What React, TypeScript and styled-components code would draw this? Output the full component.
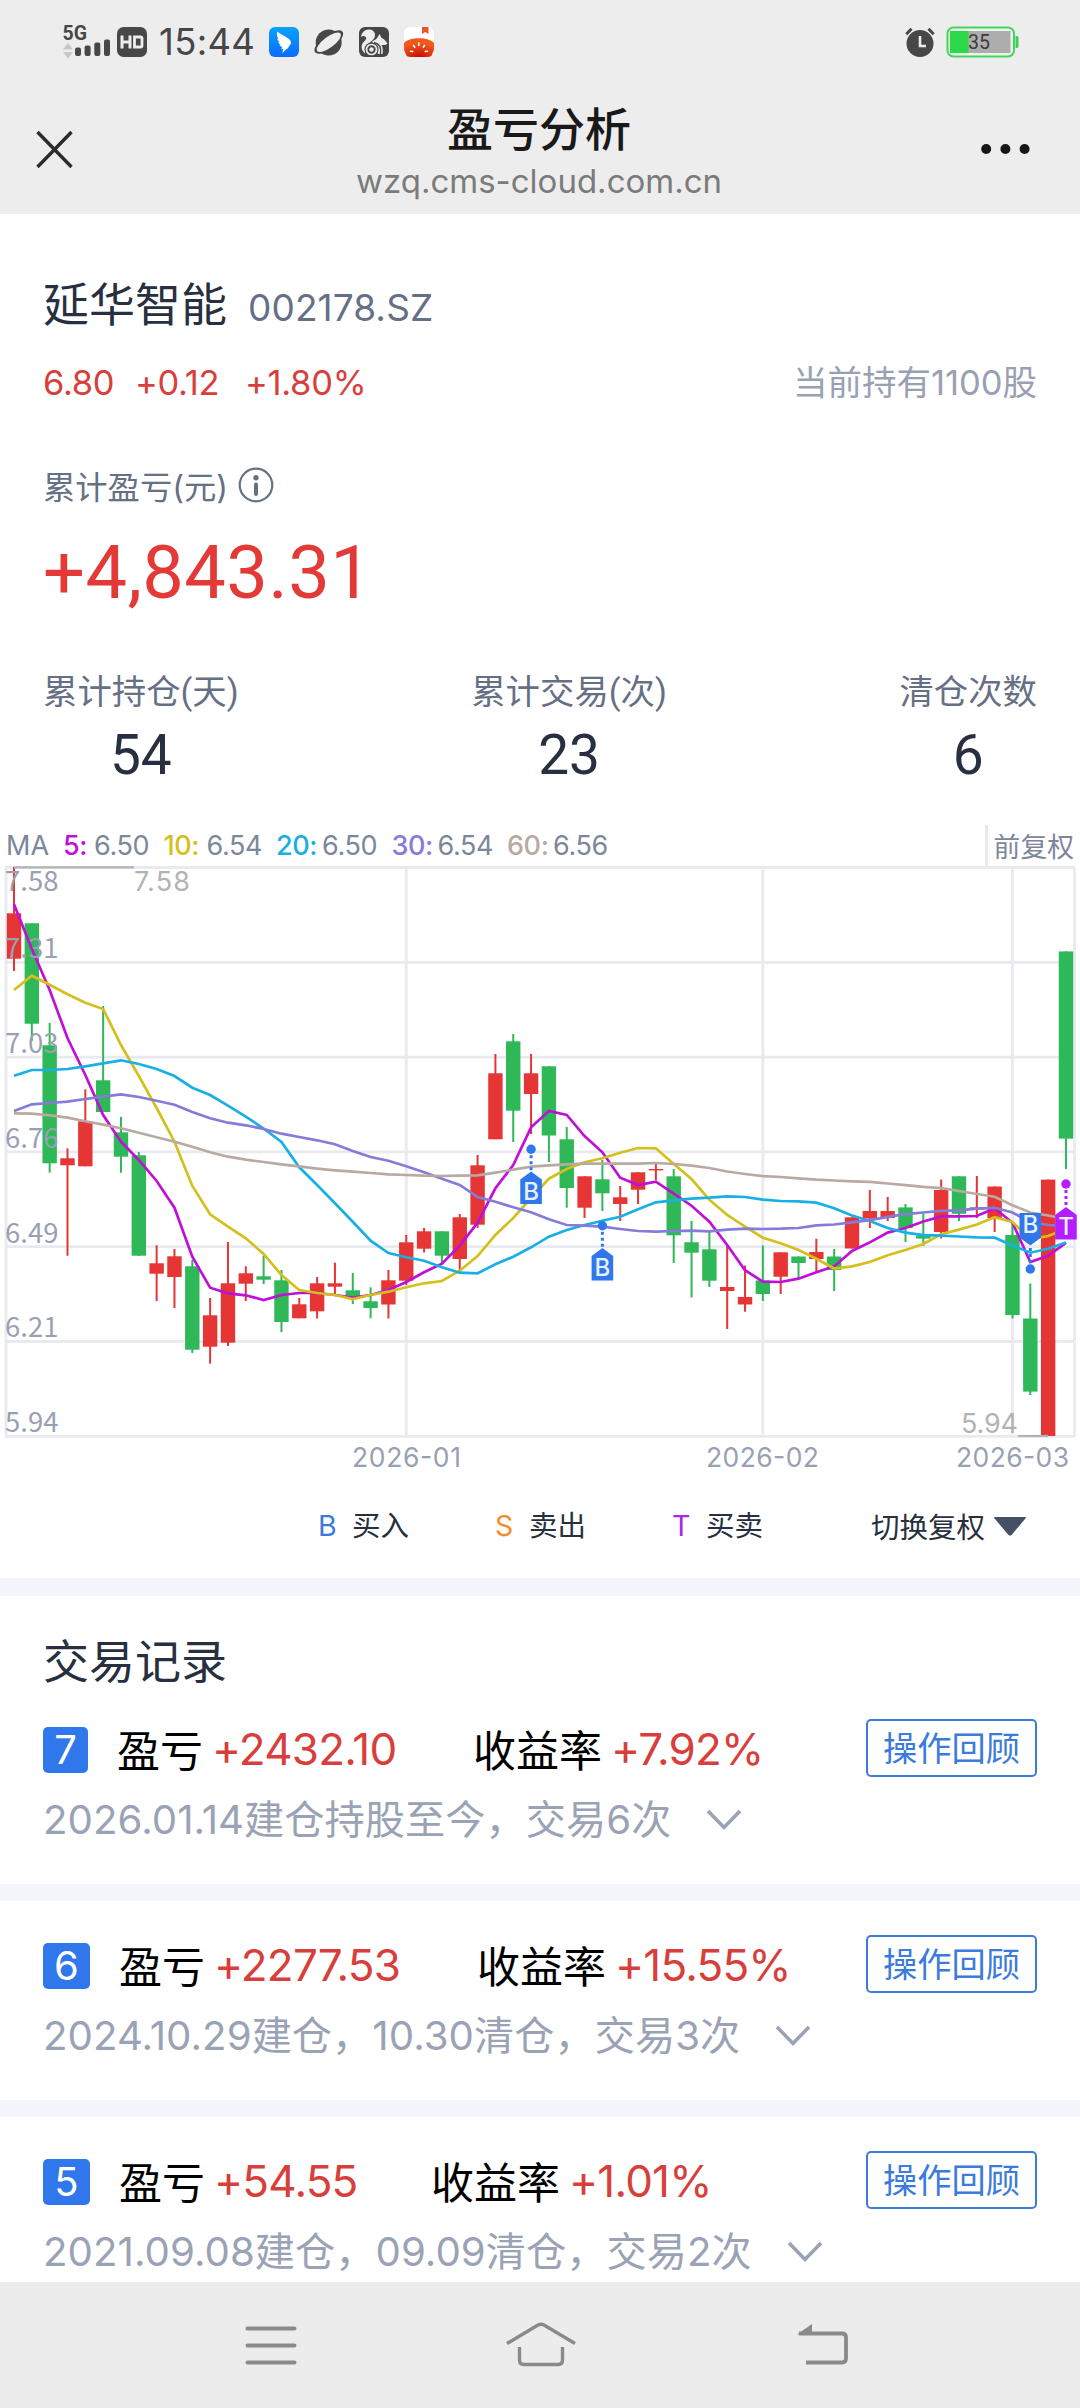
import React from "react";
import styled, { createGlobalStyle } from "styled-components";

const CJK = `"Noto Sans CJK SC", sans-serif`;
const NUM = `Roboto, ${CJK}`;
const UI = `Inter, ${CJK}`;

const Global = createGlobalStyle`
  * { box-sizing: border-box; }
  body { margin: 0; background: #fff; font-family: ${UI}; }
`;

const Screen = styled.div`
  width: 1080px;
  height: 2408px;
  display: flex;
  flex-direction: column;
  background: #fff;
  overflow: hidden;
`;

/* ---------- top area ---------- */

const TopArea = styled.header`
  flex: none;
  height: 214px;
  background: #ededed;
  display: flex;
  flex-direction: column;
`;

const StatusBar = styled.div`
  height: 84px;
  padding: 0 60px 0 62px;
  display: flex;
  align-items: center;
  justify-content: space-between;
`;

const StatusGroup = styled.div<{ $gap: number }>`
  display: flex;
  align-items: center;
  gap: ${(p) => p.$gap}px;
`;

const Signal = styled.div`
  width: 50px;
  height: 36px;
  margin-right: 5px;

  svg {
    display: block;
    overflow: visible;
  }
`;

const Clock = styled.span`
  width: 99px;
  margin: 0 11px 0 12px;
  font: 400 36.5px/44px ${UI};
  letter-spacing: 0.3px;
  color: #474747;
  white-space: nowrap;
`;

const TitleBar = styled.div`
  height: 130px;
  padding: 0 50px 0 36px;
  display: grid;
  grid-template-columns: 120px 1fr 106px;
`;

const TitleButton = styled.button<{ $end?: boolean }>`
  border: 0;
  padding: 0;
  background: none;
  height: 130px;
  display: flex;
  align-items: center;
  justify-content: ${(p) => (p.$end ? "flex-end" : "flex-start")};
`;

const TitleText = styled.div`
  display: flex;
  flex-direction: column;
  align-items: center;
  padding: 12px 2px 0 0;
`;

const PageTitle = styled.h1`
  margin: 0;
  font: 500 46px/60px ${CJK};
  color: #191919;
`;

const PageHost = styled.div`
  font: 400 33px/40px ${UI};
  color: #7b7b7b;
  padding-top: 5px;
`;

/* ---------- summary ---------- */

const Main = styled.main`
  flex: 1;
  min-height: 0;
  overflow: hidden;
`;

const Summary = styled.section`
  padding: 57px 43px 0 43px;
  height: 611px;
`;

const Row = styled.div<{ $h: number; $top?: number }>`
  display: flex;
  align-items: baseline;
  height: ${(p) => p.$h}px;
  line-height: ${(p) => p.$h}px;
  margin-top: ${(p) => p.$top ?? 0}px;
  white-space: nowrap;
`;

const StockName = styled.h2`
  margin: 0 21px 0 0;
  font: 400 46px/60px ${CJK};
  color: #272f40;
`;

const StockCode = styled.span`
  font-size: 37px;
  letter-spacing: 0.1px;
  color: #667085;
`;

const Quote = styled.span<{ $w: number }>`
  width: ${(p) => p.$w}px;
  font-size: 34.5px;
  letter-spacing: -0.3px;
  color: #d83f3c;
`;

const Holding = styled.span`
  margin-left: auto;
  font-size: 34.5px;
  color: #98a1b3;
`;

const ProfitLabel = styled.div`
  display: flex;
  align-items: center;
  gap: 10px;
  height: 44px;
  margin-top: 55px;
  font-size: 32.3px;
  color: #667085;
`;

const Profit = styled.div`
  height: 80px;
  margin-top: 26px;
  font-family: ${NUM};
  font-size: 74px;
  font-weight: 380;
  line-height: 80px;
  letter-spacing: 0.4px;
  color: #e33a37;
`;

const Stats = styled.div`
  display: flex;
  justify-content: space-between;
  margin-top: 54px;
`;

const Stat = styled.div`
  display: flex;
  flex-direction: column;
  align-items: center;
`;

const StatLabel = styled.div`
  font-family: ${NUM};
  font-size: 34.4px;
  line-height: 50px;
  color: #667085;
`;

const StatValue = styled.div`
  font-family: ${NUM};
  font-size: 55px;
  font-weight: 380;
  line-height: 66px;
  margin-top: 5px;
  color: #272f40;
`;

/* ---------- chart ---------- */

const MaBar = styled.div`
  height: 41px;
  padding: 0 6px 0 6px;
  display: flex;
  align-items: center;
  font: 400 27px/41px ${UI};
  letter-spacing: -0.4px;
  color: #7c879b;
  white-space: nowrap;
`;

const MaName = styled.span`
  width: 57px;
  letter-spacing: 0;
`;

const MaKey = styled.span<{ $c: string; $w: number }>`
  width: ${(p) => p.$w}px;
  color: ${(p) => p.$c};
  font-weight: 500;
`;

const MaValue = styled.span`
  width: 69.5px;
`;

const Adjust = styled.span`
  margin-left: auto;
  padding-left: 6px;
  border-left: 3px solid #e9eaf0;
  font: 400 26.8px/41px ${CJK};
  letter-spacing: 0;
`;

const ChartSvg = styled.svg`
  display: block;
  overflow: visible;
`;

const Legend = styled.div`
  display: flex;
  align-items: center;
  height: 60px;
  margin: 18px 0 22px;
  padding-left: 318px;
  font-size: 28.5px;
  line-height: 42px;
  color: #272f40;
`;

const LegendItem = styled.div<{ $w: number }>`
  display: flex;
  align-items: baseline;
  width: ${(p) => p.$w}px;
`;

const LegendKey = styled.span<{ $c: string }>`
  width: 34px;
  color: ${(p) => p.$c};
`;

const SwitchAdjust = styled.button`
  display: flex;
  align-items: center;
  gap: 8px;
  border: 0;
  padding: 0;
  background: none;
  font: 400 28.5px/42px ${CJK};
  color: #272f40;
`;

/* ---------- trade records ---------- */

const Band = styled.div<{ $h: number }>`
  height: ${(p) => p.$h}px;
  background: #f4f5fa;
`;

const RecordsTitle = styled.h2`
  margin: 0;
  padding: 28px 43px 0;
  height: 104px;
  font: 400 46px/68px ${CJK};
  color: #272f40;
`;

const Record = styled.article<{ $h: number; $top: number }>`
  height: ${(p) => p.$h}px;
  padding: ${(p) => p.$top}px 43px 0;
`;

const RecordHead = styled.div`
  display: flex;
  align-items: center;
  height: 58px;
  font-size: 43px;
  line-height: 58px;
  white-space: nowrap;
`;

const Badge = styled.span<{ $w: number }>`
  width: ${(p) => p.$w}px;
  height: 46px;
  margin: 4px 29px 0 0;
  border-radius: 5px;
  background: #2f77ea;
  color: #fff;
  font-size: 40px;
  line-height: 46px;
  text-align: center;
`;

const Label = styled.span`
  font-family: ${CJK};
  font-size: 43px;
  color: #000;
`;

const Gain = styled.span<{ $w?: number }>`
  width: ${(p) => (p.$w ? `${p.$w}px` : "auto")};
  margin-left: 9px;
  padding-top: 1px;
  font-size: 44px;
  letter-spacing: -0.8px;
  color: #d83f3c;
`;

const Review = styled.button`
  width: 171px;
  height: 58px;
  margin-left: auto;
  padding: 0 0 3px;
  border: 2px solid #3a7bdc;
  border-radius: 5px;
  background: #fff;
  font: 400 34.2px/51px ${CJK};
  color: #3a7bdc;
`;

const RecordNote = styled.div<{ $gap: number }>`
  display: flex;
  align-items: center;
  gap: ${(p) => p.$gap}px;
  height: 60px;
  margin-top: 13px;
  font-size: 40.2px;
  line-height: 60px;
  letter-spacing: 0.05px;
  color: #9aa3b5;
  white-space: nowrap;
`;

/* ---------- system navigation ---------- */

const NavBar = styled.nav`
  flex: none;
  height: 126px;
  padding-left: 245px;
  background: #ececec;
  display: grid;
  grid-template-columns: 260px 292px 52px;
  align-items: center;
`;

/* ---------- data ---------- */

type Candle = [up: 0 | 1, high: number, top: number, bottom: number, low: number];

const candles: Candle[] = [
  [1, 867, 913.3, 958.7, 971], [0, 923.3, 923.3, 1023.7, 1041], [0, 1023, 1045.3, 1163.3, 1172.7],
  [1, 1148.3, 1158.3, 1165.3, 1255.7], [1, 1089.3, 1121.3, 1166.3, 1166.3], [0, 1006, 1080.3, 1112, 1112],
  [0, 1117, 1132.3, 1156.7, 1172.7], [0, 1152, 1155.3, 1255.7, 1255.7], [1, 1245.3, 1263.3, 1273.7, 1301],
  [1, 1249, 1256.3, 1277, 1308], [0, 1260, 1266.3, 1349.7, 1353], [1, 1298, 1315.3, 1346.7, 1363.7],
  [1, 1242, 1283.3, 1342.7, 1346], [1, 1266.3, 1273.3, 1283.7, 1301], [0, 1255.5, 1276.3, 1279.7, 1284],
  [0, 1270, 1280.3, 1322, 1332], [1, 1298, 1304.3, 1318.3, 1318.3], [1, 1277, 1283.3, 1311.3, 1318.5],
  [1, 1262.7, 1283.3, 1286.7, 1294], [0, 1273, 1290.3, 1296.7, 1304], [0, 1287.3, 1301.3, 1308, 1318.3],
  [1, 1270, 1280.3, 1304.5, 1318.5], [1, 1235, 1242.3, 1280.7, 1285], [1, 1228, 1231.3, 1248.7, 1252.5],
  [0, 1231.3, 1231.3, 1255.7, 1265], [1, 1214, 1217.3, 1259, 1270], [1, 1155, 1165.3, 1224.7, 1228],
  [1, 1054, 1073.3, 1139.3, 1139.3], [0, 1034, 1041.3, 1110.7, 1142], [1, 1054, 1073.3, 1094, 1134],
  [0, 1066.3, 1066.3, 1135.5, 1162], [0, 1127, 1139.3, 1188, 1207.7], [1, 1176.3, 1176.3, 1207.7, 1218],
  [0, 1160, 1179.3, 1193.3, 1211], [1, 1186, 1197.3, 1204, 1221], [1, 1172.3, 1172.3, 1189.7, 1204],
  [1, 1164, 1169, 1170.4, 1180], [0, 1169, 1176.3, 1235.3, 1263], [0, 1221, 1242.3, 1252.7, 1297.5],
  [0, 1232, 1249.3, 1280.7, 1287], [1, 1246, 1287, 1291, 1329], [1, 1265.5, 1297, 1304.5, 1311.7],
  [0, 1245.5, 1280.5, 1294, 1301], [1, 1252.3, 1252.3, 1276.7, 1294], [0, 1256.5, 1256.5, 1263, 1278],
  [1, 1238.7, 1252, 1259, 1271.5], [0, 1249, 1256.5, 1270, 1291], [1, 1217.3, 1217.3, 1248.5, 1248.5],
  [1, 1190, 1211, 1218.5, 1228], [1, 1197, 1211, 1218, 1221], [0, 1204, 1207.4, 1228, 1242],
  [0, 1214, 1235.6, 1238.6, 1246], [1, 1179.6, 1190, 1232, 1238.5], [0, 1176.3, 1176.3, 1213.8, 1221],
  [1, 1176, 1207.4, 1209.4, 1218], [1, 1186.5, 1186.5, 1218, 1232], [0, 1222, 1235, 1315, 1318.5],
  [0, 1283.5, 1318.5, 1391.6, 1395], [1, 1179.6, 1179.6, 1436, 1436], [0, 951.4, 951.4, 1138.6, 1169],
];

const averages: { color: string; ys: number[] }[] = [
  {
    color: "#c010d8",
    ys: [904.3, 949, 990, 1038, 1075, 1115, 1141.7, 1160, 1181, 1207.7, 1256.7, 1287.7, 1293.3, 1295.3, 1300, 1295, 1293, 1293, 1295, 1297.5, 1295, 1290, 1282, 1272.3, 1263.7, 1245.7, 1222.7, 1188.3, 1165, 1127.3, 1111, 1115, 1136, 1152.3, 1177.7, 1185, 1181.7, 1193.7, 1205.7, 1221.7, 1245, 1270.2, 1281.7, 1282, 1278.7, 1272.3, 1266.4, 1251, 1242.4, 1232.6, 1228, 1221.5, 1216.4, 1216.4, 1216, 1208.3, 1222.8, 1262, 1255.7, 1242.9],
  },
  {
    color: "#d4c01c",
    ys: [990, 975.7, 984.7, 994.3, 1002.7, 1009, 1045, 1076, 1108, 1141.7, 1186, 1214.3, 1226.7, 1238.3, 1254, 1275, 1290, 1293, 1295, 1299, 1295, 1291.7, 1287.3, 1283.3, 1281, 1270.7, 1256, 1235, 1218, 1198, 1178.7, 1169, 1162.3, 1158.3, 1152.7, 1148, 1148.3, 1164, 1179, 1199.7, 1215, 1226.6, 1237.7, 1243.3, 1250, 1258.7, 1268.5, 1266.4, 1262, 1255.3, 1250, 1244, 1234.3, 1229.6, 1224.5, 1217.2, 1222, 1239, 1236, 1229],
  },
  {
    color: "#18b0e4",
    ys: [1075.7, 1070, 1070, 1069, 1066.3, 1063.3, 1060.3, 1064, 1069, 1076, 1087.7, 1095, 1105.7, 1116.7, 1128.5, 1142, 1167.3, 1185, 1203.3, 1221.7, 1240.7, 1253, 1257.3, 1260.7, 1267.3, 1272.7, 1273.3, 1264.3, 1256.7, 1247.3, 1236.7, 1230, 1225, 1220.7, 1216.7, 1209.3, 1202.3, 1200.3, 1198.7, 1197.7, 1196.3, 1197, 1199.7, 1201, 1201.4, 1202.7, 1208.3, 1215.5, 1221, 1228, 1232.6, 1235.2, 1235.6, 1236.5, 1237.3, 1237.7, 1245.4, 1252.7, 1248.8, 1242.4],
  },
  {
    color: "#857bd8",
    ys: [1111, 1104.3, 1103, 1101.7, 1099, 1096.7, 1094.3, 1097, 1100.7, 1104.7, 1112, 1118.3, 1122.7, 1125.3, 1129, 1133.7, 1137, 1140.3, 1144.3, 1151, 1157, 1160.7, 1166.3, 1172.3, 1178.7, 1185, 1197, 1201.7, 1207.3, 1212.3, 1219.3, 1225, 1225.7, 1226.7, 1229, 1231, 1231.7, 1231, 1230.7, 1231.3, 1229.6, 1228.7, 1229, 1228.7, 1228, 1225.3, 1224.5, 1222.3, 1220.2, 1216.8, 1214.2, 1212.5, 1210.8, 1210.4, 1208.7, 1207.8, 1212.5, 1222, 1225, 1226],
  },
  {
    color: "#b8aaa3",
    ys: [1113.3, 1113.7, 1115.3, 1117.7, 1121.3, 1124.7, 1128.3, 1132.7, 1137.3, 1141.7, 1146.7, 1152.3, 1156.7, 1159.7, 1162, 1164.3, 1166.3, 1168.7, 1170.3, 1171.7, 1173, 1174.3, 1175, 1175.7, 1176, 1175.7, 1175.3, 1172.7, 1169.7, 1166.7, 1165.3, 1164.3, 1163.7, 1163.7, 1163.7, 1163.7, 1163, 1164, 1165.7, 1168, 1171.5, 1174, 1176.2, 1177, 1178.3, 1179.6, 1180.5, 1181.3, 1181.8, 1183.5, 1185.2, 1186.9, 1188.2, 1191, 1194, 1196.7, 1205.2, 1212.5, 1215.5, 1219],
  },
];

const priceLabels = ["7.58", "7.31", "7.03", "6.76", "6.49", "6.21", "5.94"];
const GRID_TOP = 867.5;
const GRID_STEP = 94.8;
const xOf = (i: number) => 14 + i * 17.83;

const maItems = [
  { key: "5:", value: "6.50", color: "#c010d8", w: 31 },
  { key: "10:", value: "6.54", color: "#d4c01c", w: 43 },
  { key: "20:", value: "6.50", color: "#18b0e4", w: 46 },
  { key: "30:", value: "6.54", color: "#857bd8", w: 46 },
  { key: "60:", value: "6.56", color: "#b8aaa3", w: 46 },
];

const records = [
  { no: "7", bw: 45, gain: "+2432.10", gw: 261, rate: "+7.92%", note: "2026.01.14建仓持股至今，交易6次", h: 184, top: 19 },
  { no: "6", bw: 47, gain: "+2277.53", gw: 263, rate: "+15.55%", note: "2024.10.29建仓，10.30清仓，交易3次", h: 199, top: 34 },
  { no: "5", bw: 47, gain: "+54.55", gw: 217, rate: "+1.01%", note: "2021.09.08建仓，09.09清仓，交易2次", h: 199, top: 34 },
];

/* ---------- chart pieces ---------- */

/** Trade tag on the canvas: a dot, a dotted lead and a pointed label. */
function Marker({ i, dot, tip, color, letter }: { i: number; dot: number; tip: number; color: string; letter: string }) {
  const x = xOf(i);
  const d = tip > dot ? 1 : -1;
  const end = tip + d * 32.5;
  const shoulder = tip + d * 8;
  const w = 10.8;
  const middle = (shoulder + end) / 2;
  return (
    <g>
      <line x1={x} x2={x} y1={dot} y2={tip} stroke={color} strokeWidth={3} strokeDasharray="3 3" />
      <circle cx={x} cy={dot} r={4.7} fill={color} />
      <path d={`M${x} ${tip}L${x + w} ${shoulder}V${end}H${x - w}V${shoulder}Z`} fill={color} />
      <text x={x} y={middle + 8} textAnchor="middle" fontFamily="Inter, sans-serif" fontSize={24} fontWeight={500} fill="#e8f0ff">
        {letter}
      </text>
    </g>
  );
}

function Chart() {
  return (
    <ChartSvg width="1080" height="612" viewBox="0 866 1080 612">
      <g stroke="#e9eaf0" strokeWidth="2.8" fill="none">
        {priceLabels.map((p, i) => (
          <line key={p} x1="5" x2="1075" y1={GRID_TOP + i * GRID_STEP} y2={GRID_TOP + i * GRID_STEP} />
        ))}
        {[6, 1074.5, xOf(22), xOf(42), xOf(56)].map((x) => (
          <line key={x} x1={x} x2={x} y1={GRID_TOP} y2={GRID_TOP + 6 * GRID_STEP} />
        ))}
      </g>
      {candles.map(([up, high, top, bottom, low], i) => (
        <g key={i} fill={up ? "#e53535" : "#2eb857"}>
          <rect x={xOf(i) - 1} y={high} width="2" height={low - high} />
          <rect x={xOf(i) - 7.2} y={top} width="14.4" height={bottom - top} />
        </g>
      ))}
      {averages.map((a) => (
        <polyline
          key={a.color}
          points={a.ys.map((y, i) => `${xOf(i)},${y}`).join(" ")}
          fill="none"
          stroke={a.color}
          strokeWidth="2.7"
        />
      ))}
      <g stroke="#b3b3b3" strokeWidth="2.2">
        <line x1="14" x2="134" y1="867.3" y2="867.3" />
        <line x1="1018" x2="1048" y1="1436" y2="1436" />
      </g>
      <g fontFamily={CJK} fontSize="27.5" fill="#98a1b3">
        {priceLabels.map((p, i) => (
          <text key={p} x="5" y={i === 0 ? 890.5 : GRID_TOP + i * GRID_STEP - 4.2}>{p}</text>
        ))}
      </g>
      <g fontFamily="Inter, sans-serif" fontSize="27" fill="#b3b3b3">
        <text x="134" y="890.5" textLength="56">7.58</text>
        <text x="961" y="1432.5" textLength="57">5.94</text>
      </g>
      <g fontFamily="Inter, sans-serif" fontSize="26.5" fill="#98a1b3">
        <text x="352" y="1467" textLength="109">2026-01</text>
        <text x="706" y="1467" textLength="113">2026-02</text>
        <text x="956" y="1467" textLength="113">2026-03</text>
      </g>
      <Marker i={29} dot={1149.3} tip={1171.5} color="#2f77ea" letter="B" />
      <Marker i={33} dot={1225.7} tip={1248} color="#2f77ea" letter="B" />
      <Marker i={57} dot={1269} tip={1245.5} color="#2f77ea" letter="B" />
      <Marker i={59} dot={1184} tip={1207} color="#b41eff" letter="T" />
    </ChartSvg>
  );
}

/* ---------- icons ---------- */

const SignalIcon = () => (
  <svg width="50" height="36" viewBox="62 24 50 36">
    <text x="62.500" y="40" fontFamily="Roboto, sans-serif" fontWeight="700" fontSize="20.500" textLength="24.500" lengthAdjust="spacingAndGlyphs" fill="#474747">5G</text>
    <path d="M68 43l5 6.500H63zM68 58.500l5-6.500H63z" fill="#c6c6c6" />
    <g fill="#474747">
      <rect x="75" y="47.500" width="6" height="8.500" rx="2" />
      <rect x="84.600" y="45.500" width="6" height="10.500" rx="2" />
      <rect x="94.300" y="42.500" width="6" height="13.500" rx="2" />
      <rect x="104" y="39.500" width="6" height="16.500" rx="2" />
    </g>
  </svg>
);

const HdIcon = () => (
  <svg width="30" height="30" viewBox="0 0 30 30">
    <rect width="30" height="30" rx="6.500" fill="#474747" />
    <path d="M5 8.500v13M13 8.500v13M5 15h8" stroke="#ededed" strokeWidth="3" fill="none" />
    <path d="M17.500 10h6q1.500 0 1.500 1.500v7q0 1.500-1.500 1.500h-6z" stroke="#ededed" strokeWidth="2.800" fill="none" />
  </svg>
);

const WingIcon = () => (
  <svg width="30" height="30" viewBox="0 0 30 30">
    <defs>
      <linearGradient id="wing" x1="0" y1="0" x2="0" y2="1">
        <stop offset="0" stopColor="#0aa2fb" />
        <stop offset="1" stopColor="#0a6cff" />
      </linearGradient>
    </defs>
    <rect width="30" height="30" rx="6" fill="url(#wing)" />
    <path d="M8.300 4.500C11 7.500 18 9.500 20.500 12.500c1.500 1.800 1.700 3 1.300 4.300l-3.300 5-1 .3-4.300 4.200 1-4.300-2-.3 1-1.700-2.700-1.300 1-1-2.500-2 1.300-.6-2.300-3 1.300-.2C8 9.500 7.500 7 8.300 4.500z" fill="#fff" />
  </svg>
);

const PlanetIcon = () => (
  <svg width="30" height="30" viewBox="0 0 30 30">
    <circle cx="14.700" cy="15.500" r="13" fill="#474747" />
    <ellipse cx="14.800" cy="15" rx="17.200" ry="7" transform="rotate(-37 14.800 15)" fill="#474747" />
    <ellipse cx="14.800" cy="15.300" rx="14.600" ry="5.400" transform="rotate(-37 14.800 15.300)" fill="#ededed" />
  </svg>
);

const SquirrelIcon = () => (
  <svg width="30" height="30" viewBox="0 0 30 30">
    <rect width="30" height="30" rx="6" fill="#474747" />
    <path d="M6 26.500C2 23 1.500 18 5 14.500c2-2 3-3.500 1.500-4.800C5 8.500 3 9 2 10 2.500 5 6.500 2 10.500 2.500c5 .5 7 5 4.500 9-1.500 2.300-4 3.500-5.500 5.500C7 19 5.500 22 6 26.500z" fill="#ededed" />
    <path d="M13 14.500c3-1.500 5.500-3 7.500-7.500 1 1.500 1.500 2.500 1.500 3.500 2.500 1 4.500 3 6.500 6-1.500 1.800-4 1.500-6 1.500 1.500 3 1.500 6 1 9H19z" fill="#ededed" />
    <circle cx="12.500" cy="22.500" r="7" fill="#474747" />
    <circle cx="12.500" cy="22.500" r="5" fill="none" stroke="#ededed" strokeWidth="1.700" />
    <circle cx="12.500" cy="22.500" r="2.200" fill="#ededed" />
    <path d="M15 15.500c5 1 7.500 5 6.500 11.500" stroke="#474747" strokeWidth="1.400" fill="none" />
  </svg>
);

const TomatoIcon = () => (
  <svg width="30" height="30" viewBox="0 0 30 30">
    <defs>
      <radialGradient id="tomato" cx=".5" cy="1" r=".75">
        <stop offset="0" stopColor="#c60b08" />
        <stop offset="1" stopColor="#f15a1c" />
      </radialGradient>
      <clipPath id="tile"><rect width="30" height="30" rx="6" /></clipPath>
    </defs>
    <g clipPath="url(#tile)">
      <rect width="30" height="30" fill="#fff" />
      <path d="M18 0h6.500v7l-3.200-2-3.300 2z" fill="#e5562b" />
      <path d="M0 16c4-6.500 26-6.500 30 0v7l-3 7H3l-3-7z" fill="url(#tomato)" />
      <path d="M14.800 16v2.500M9.500 18.500l1.200 1.800M20.500 18.500l-1.200 1.800M6.500 24.300l2.200.2M23.500 24.300l-2.200.2" stroke="#fff" strokeWidth="1.600" strokeLinecap="round" />
    </g>
  </svg>
);

const AlarmIcon = () => (
  <svg width="30" height="30" viewBox="0 0 30 30">
    <circle cx="15" cy="16.500" r="13.500" fill="#474747" />
    <path d="M1.300 7.200l5.200-5.400M28.700 7.200l-5.200-5.400" stroke="#474747" strokeWidth="3" />
    <path d="M15 9v10h6" stroke="#ededed" strokeWidth="2.600" fill="none" />
  </svg>
);

const BatteryIcon = () => (
  <svg width="74" height="32" viewBox="0 0 74 32">
    <rect x="1.500" y="1.500" width="66.500" height="29" rx="6" fill="#e9f6ea" stroke="#45d35b" strokeWidth="2" />
    <rect x="4" y="5" width="60.500" height="22" fill="#adadad" />
    <rect x="4" y="5" width="18.500" height="22" fill="#2bd848" />
    <path d="M69.500 10h1.500q1.500 0 1.500 1.500v9q0 1.500-1.500 1.500h-1.500z" fill="#3fcf58" />
    <text x="22" y="23" fontFamily="Roboto, sans-serif" fontSize="19.500" fill="#3a3a3a">35</text>
  </svg>
);

const InfoIcon = () => (
  <svg width="36" height="36" viewBox="0 0 36 36">
    <circle cx="18" cy="18" r="16.300" fill="none" stroke="#667085" strokeWidth="2.200" />
    <circle cx="18" cy="10.700" r="2.700" fill="#667085" />
    <path d="M18 17.500v9.500" stroke="#667085" strokeWidth="4" strokeLinecap="round" />
  </svg>
);

export default function App() {
  return (
    <Screen>
      <Global />
      <TopArea>
        <StatusBar>
          <StatusGroup $gap={0}>
            <Signal><SignalIcon /></Signal>
            <HdIcon />
            <Clock>15:44</Clock>
            <StatusGroup $gap={15}>
              <WingIcon />
              <PlanetIcon />
              <SquirrelIcon />
              <TomatoIcon />
            </StatusGroup>
          </StatusGroup>
          <StatusGroup $gap={11}>
            <AlarmIcon />
            <BatteryIcon />
          </StatusGroup>
        </StatusBar>
        <TitleBar>
          <TitleButton aria-label="关闭">
            <svg width="37" height="39" viewBox="0 0 37 39">
              <path d="M1.500 2l34 35M35.500 2l-34 35" stroke="#2b2b2b" strokeWidth="3.400" />
            </svg>
          </TitleButton>
          <TitleText>
            <PageTitle>盈亏分析</PageTitle>
            <PageHost>wzq.cms-cloud.com.cn</PageHost>
          </TitleText>
          <TitleButton $end aria-label="更多">
            <svg width="49" height="12" viewBox="0 0 49 12" fill="#161616">
              <circle cx="5.200" cy="6" r="5" />
              <circle cx="24.400" cy="6" r="5" />
              <circle cx="43.600" cy="6" r="5" />
            </svg>
          </TitleButton>
        </TitleBar>
      </TopArea>

      <Main>
        <Summary>
          <Row $h={60}>
            <StockName>延华智能</StockName>
            <StockCode>002178.SZ</StockCode>
          </Row>
          <Row $h={50} $top={27}>
            <Quote $w={92}>6.80</Quote>
            <Quote $w={110}>+0.12</Quote>
            <Quote $w={130}>+1.80%</Quote>
            <Holding>当前持有1100股</Holding>
          </Row>
          <ProfitLabel>
            累计盈亏(元)
            <InfoIcon />
          </ProfitLabel>
          <Profit>+4,843.31</Profit>
          <Stats>
            <Stat><StatLabel>累计持仓(天)</StatLabel><StatValue>54</StatValue></Stat>
            <Stat><StatLabel>累计交易(次)</StatLabel><StatValue>23</StatValue></Stat>
            <Stat><StatLabel>清仓次数</StatLabel><StatValue>6</StatValue></Stat>
          </Stats>
        </Summary>

        <MaBar>
          <MaName>MA</MaName>
          {maItems.map((m) => (
            <React.Fragment key={m.key}>
              <MaKey $c={m.color} $w={m.w}>{m.key}</MaKey>
              <MaValue>{m.value}</MaValue>
            </React.Fragment>
          ))}
          <Adjust>前复权</Adjust>
        </MaBar>
        <Chart />

        <Legend>
          <LegendItem $w={177}><LegendKey $c="#3a7bdc">B</LegendKey>买入</LegendItem>
          <LegendItem $w={177}><LegendKey $c="#f08c2e">S</LegendKey>卖出</LegendItem>
          <LegendItem $w={199}><LegendKey $c="#b026e8">T</LegendKey>买卖</LegendItem>
          <SwitchAdjust>
            切换复权
            <svg width="34" height="21" viewBox="0 0 34 21">
              <path d="M2 1h30q1.500 0 .6 1.300L19 18.500q-2 2.300-4 0L1.400 2.300Q.5 1 2 1z" fill="#455064" />
            </svg>
          </SwitchAdjust>
        </Legend>
        <Band $h={18} />

        <RecordsTitle>交易记录</RecordsTitle>
        {records.map((r, i) => (
          <React.Fragment key={r.no}>
            {i > 0 && <Band $h={17} />}
            <Record $h={r.h} $top={r.top}>
              <RecordHead>
                <Badge $w={r.bw}>{r.no}</Badge>
                <Label>盈亏</Label>
                <Gain $w={r.gw}>{r.gain}</Gain>
                <Label>收益率</Label>
                <Gain>{r.rate}</Gain>
                <Review>操作回顾</Review>
              </RecordHead>
              <RecordNote $gap={35}>
                {r.note}
                <svg width="36" height="22" viewBox="0 0 36 22">
                  <path d="M2 2l16 16.500L34 2" fill="none" stroke="#9aa3b5" strokeWidth="3.600" />
                </svg>
              </RecordNote>
            </Record>
          </React.Fragment>
        ))}
      </Main>

      <NavBar>
        <svg width="52" height="40" viewBox="0 0 52 40">
          <path d="M2.500 3.500h47M2.500 20.500h47M2.500 37.500h47" stroke="#8a8a8a" strokeWidth="4" strokeLinecap="round" />
        </svg>
        <svg width="72" height="46" viewBox="0 0 72 46" fill="none" stroke="#8a8a8a" strokeWidth="3.400">
          <path d="M2 21.500L33 3q3-1.500 6 0l31 18.500" />
          <path d="M14.500 25v13q0 4.500 4.500 4.500h34q4.500 0 4.500-4.500V25" />
        </svg>
        <svg width="52" height="42" viewBox="0 0 52 42">
          <path d="M2 9.500h43q4 0 4 4v21q0 4-4 4H9" fill="none" stroke="#8a8a8a" strokeWidth="3.800" />
          <path d="M0 10.500L15 0v9z" fill="#8a8a8a" />
        </svg>
      </NavBar>
    </Screen>
  );
}
